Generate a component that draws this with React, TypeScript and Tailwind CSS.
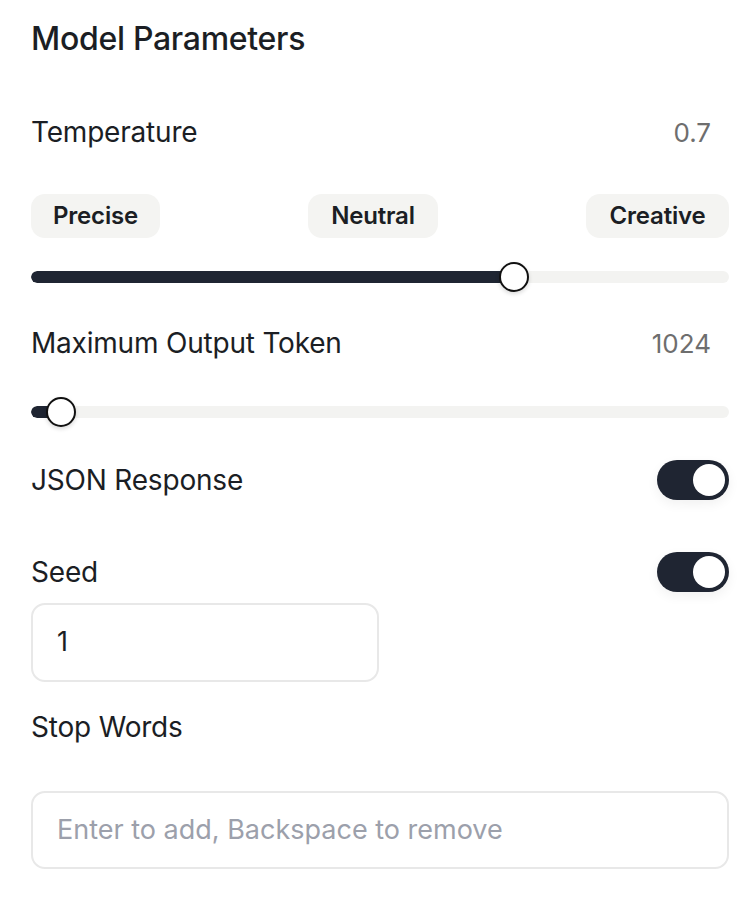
import React from "react";

function Slider({ pct }: { pct: number }) {
  return (
    <div className="relative h-[30px] flex items-center">
      <div className="w-full h-[12px] rounded-full bg-[#f3f3f1] overflow-hidden">
        <div className="h-full bg-[#1f2532] rounded-full" style={{ width: `${pct}%` }} />
      </div>
      <div
        className="absolute top-0 w-[30px] h-[30px] rounded-full bg-white border-2 border-[#111] shadow-[0_2px_4px_rgba(0,0,0,0.15)]"
        style={{ left: `calc(${pct}% - 15px)` }}
      />
    </div>
  );
}

function Toggle() {
  return (
    <div className="w-[72px] h-[40px] rounded-full bg-[#1f2532] flex items-center justify-end px-[4px] shadow-[0_4px_12px_rgba(0,0,0,0.06)]">
      <div className="w-[32px] h-[32px] rounded-full bg-white" />
    </div>
  );
}

export default function App() {
  return (
    <div className="min-h-[900px] bg-white text-[#1b1e24]" style={{ fontFamily: "Inter, 'Noto Sans', sans-serif" }}>
      <div className="pl-[31px] pr-[25px] pt-[20px]">
        <h1 className="text-[32px] font-medium leading-[38px] tracking-[-0.3px]">Model Parameters</h1>

        <div className="mt-[57px] h-[34px] flex items-center justify-between pr-[18px]">
          <span className="text-[28px] leading-[34px] tracking-[-0.2px]">Temperature</span>
          <span className="text-[26px] text-[#6e6e6e]">0.7</span>
        </div>

        <div className="mt-[45px] flex justify-between">
          <button className="h-[44px] w-[129px] rounded-[14px] bg-[#f4f4f2] text-[24px] font-semibold tracking-[-0.2px]">Precise</button>
          <button className="h-[44px] w-[130px] rounded-[14px] bg-[#f4f4f2] text-[24px] font-semibold tracking-[-0.2px]">Neutral</button>
          <button className="h-[44px] w-[143px] rounded-[14px] bg-[#f4f4f2] text-[24px] font-semibold tracking-[-0.2px]">Creative</button>
        </div>

        <div className="mt-[24px]">
          <Slider pct={69.2} />
        </div>

        <div className="mt-[34px] h-[34px] flex items-center justify-between pr-[18px]">
          <span className="text-[28px] leading-[34px] tracking-[-0.2px]">Maximum Output Token</span>
          <span className="text-[26px] text-[#6e6e6e]">1024</span>
        </div>

        <div className="mt-[37px]">
          <Slider pct={4.3} />
        </div>

        <div className="mt-[33px] h-[40px] flex items-center justify-between">
          <span className="text-[28px] leading-[34px] tracking-[-0.2px]">JSON Response</span>
          <Toggle />
        </div>

        <div className="mt-[52px] h-[40px] flex items-center justify-between">
          <span className="text-[28px] leading-[34px] tracking-[-0.2px]">Seed</span>
          <Toggle />
        </div>

        <div className="mt-[11px] w-[348px] h-[79px] rounded-[14px] border-2 border-[#e8e8e8] flex items-center px-[24px]">
          <span className="text-[27px]">1</span>
        </div>

        <div className="mt-[28px] h-[34px] text-[28px] leading-[34px] tracking-[-0.2px]">Stop Words</div>

        <div className="mt-[47px] h-[78px] rounded-[14px] border-2 border-[#e8e8e8] flex items-center px-[24px]">
          <span className="text-[27px] text-[#9ca0ab]">Enter to add, Backspace to remove</span>
        </div>
      </div>
    </div>
  );
}
